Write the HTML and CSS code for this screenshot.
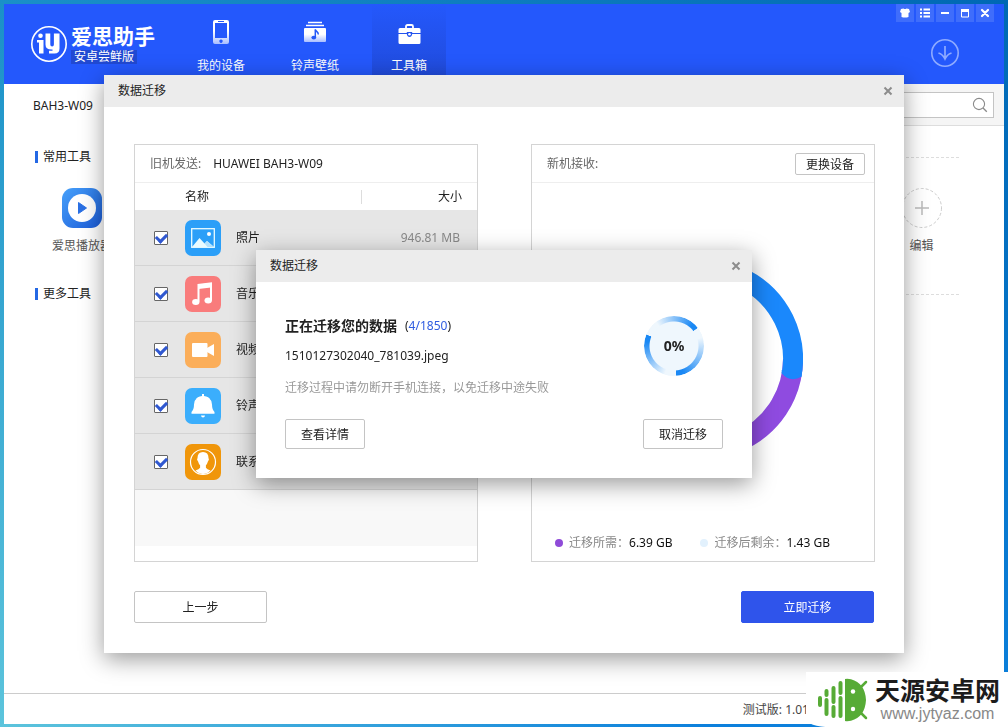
FILE: index.html
```html
<!DOCTYPE html>
<html lang="zh-CN">
<head>
<meta charset="utf-8">
<title>爱思助手 安卓尝鲜版</title>
<link rel="stylesheet" href="styles.css">
</head>
<body>
<div class="window">
  <header class="topbar">
    <div class="brand">
      <svg class="brand-mark" viewBox="0 0 38 38" aria-hidden="true">
        <circle cx="19" cy="19" r="17.2" fill="none" stroke="#fff" stroke-width="1.6"/>
        <circle cx="10.500" cy="10.8" r="2.300" fill="#fff"/>
        <path d="M7 15h6.500v13.500H9V17.500H7z" fill="#fff"/>
        <path d="M15.500 8.500h4.800v11q0 2 1.800 2t1.800-2v-11h5.600v15q0 5-5 5h-5.500v-2.800h3.500v-1.200q-7 .5-7-5z" fill="#fff"/>
      </svg>
      <div class="brand-text">
        <strong class="brand-name">爱思助手</strong>
        <span class="brand-edition">安卓尝鲜版</span>
      </div>
    </div>
    <nav class="tabs">
      <a class="tab" href="#device">
        <svg class="tab-icon" viewBox="0 0 26 26" aria-hidden="true">
          <defs><linearGradient id="fade" x1="0" y1="0" x2="0" y2="1"><stop offset="0" stop-color="#fff"/><stop offset=".45" stop-color="#fff"/><stop offset="1" stop-color="#a9beff"/></linearGradient></defs>
          <path fill="url(#fade)" fill-rule="evenodd" d="M7 1h12q2 0 2 2v20q0 2-2 2H7q-2 0-2-2V3q0-2 2-2zM7 4v15h12V4zM13 20.500a1.700 1.700 0 1 0 .01 0z"/>
          <path d="M10 2.500h6" stroke="#2458f8" stroke-width="1"/>
        </svg>
        <span>我的设备</span>
      </a>
      <a class="tab" href="#ringtones">
        <svg class="tab-icon" viewBox="0 0 26 26" aria-hidden="true">
          <path d="M6 3.500h14M4 6.500h18" stroke="#fff" stroke-width="1.500"/>
          <rect x="2" y="9" width="22" height="14" rx="1" fill="url(#fade)"/>
          <path d="M13.300 10.500c.4 2 3.200 2 3 5" fill="none" stroke="#2458f8" stroke-width="1.500"/>
          <path d="M13.300 10.500V18" stroke="#2458f8" stroke-width="1.500"/>
          <ellipse cx="11.800" cy="18.600" rx="2.400" ry="1.900" fill="#2458f8"/>
        </svg>
        <span>铃声壁纸</span>
      </a>
      <a class="tab tab-active" href="#toolbox" aria-current="page">
        <svg class="tab-icon" viewBox="0 0 26 26" aria-hidden="true">
          <path d="M10 9V7.500Q10 6 11.500 6h4Q17 6 17 7.500V9" fill="none" stroke="#fff" stroke-width="1.800"/>
          <path d="M4 9h19q1.500 0 1.500 1.500V14h-8.300v-1h-5.400v1H2.500v-3.500Q2.500 9 4 9z" fill="#fff"/>
          <path d="M2.500 15h8.300q.5 3 2.700 3t2.700-3h8.300v8.500q0 1.500-1.500 1.500H4q-1.500 0-1.500-1.500z" fill="#fff"/>
          <circle cx="13.500" cy="15.200" r="1.300" fill="#fff"/>
        </svg>
        <span>工具箱</span>
      </a>
    </nav>
    <div class="top-actions">
      <div class="window-controls">
        <button type="button" aria-label="皮肤"><svg viewBox="0 0 18 18"><path d="M5 5l2.500-.5q1.500 1.200 3 0L13 5l1 3-1.500 1v4q-3.500 1-7 0V9L4 8z" fill="#fff"/></svg></button>
        <button type="button" aria-label="菜单"><svg viewBox="0 0 18 18"><path d="M4 5.500h2M4 9h2M4 12.500h2M7.500 5.500H14M7.500 9H14M7.500 12.500H14" stroke="#fff" stroke-width="2"/></svg></button>
        <button type="button" aria-label="最小化"><svg viewBox="0 0 18 18"><path d="M5 9h8" stroke="#fff" stroke-width="2"/></svg></button>
        <button type="button" aria-label="最大化"><svg viewBox="0 0 18 18"><path d="M5.500 6v7h7V6" fill="none" stroke="#fff"/><path d="M5 6.500h8" stroke="#fff" stroke-width="3"/></svg></button>
        <button type="button" aria-label="关闭"><svg viewBox="0 0 18 18"><path d="M6 6l6 6M12 6l-6 6" stroke="#fff" stroke-width="2.200" stroke-linecap="round"/></svg></button>
      </div>
      <button class="download" type="button" aria-label="下载">
        <svg viewBox="0 0 30 30"><circle cx="15" cy="15" r="13.200" fill="none" stroke="#8fabff" stroke-width="1.600"/><path d="M15 8v13M8.500 15q4.500 1.500 6.500 6q2-4.500 6.500-6" fill="none" stroke="#8fabff" stroke-width="1.700"/></svg>
      </button>
    </div>
  </header>

  <div class="subbar">
    <a class="device-tab" href="#bah3">BAH3-W09</a>
    <form class="search">
      <input type="text" aria-label="搜索">
      <button type="button" aria-label="搜索"><svg viewBox="0 0 18 18"><circle cx="8" cy="8" r="5.600" fill="none" stroke="#8a8a8a" stroke-width="1.100"/><path d="M12 12l3.800 3.800" stroke="#8a8a8a" stroke-width="1.300"/></svg></button>
    </form>
  </div>

  <main class="tools">
    <section class="tool-section">
      <h2 class="section-title">常用工具</h2>
      <div class="tool-row">
        <a class="tool" href="#player">
          <svg class="tool-icon" viewBox="0 0 40 40" aria-hidden="true">
            <defs><linearGradient id="player" x1="0" y1="0" x2="1" y2="1"><stop offset="0" stop-color="#46a0fa"/><stop offset="1" stop-color="#1c5cd8"/></linearGradient></defs>
            <rect width="40" height="40" rx="11" fill="url(#player)"/><circle cx="20" cy="20" r="14" fill="#fff"/><path d="M16.500 14.500l8 5.500-8 5.500z" fill="#2a70e4" stroke="#2a70e4" stroke-linejoin="round"/>
          </svg>
          <span>爱思播放器</span>
        </a>
        <a class="tool" href="#edit">
          <svg class="tool-icon" viewBox="0 0 40 40" aria-hidden="true"><circle cx="20" cy="20" r="19.500" fill="none" stroke="#ccc" stroke-dasharray="3 2"/><path d="M20 13v14M13 20h14" stroke="#bbb" stroke-width="1.500"/></svg>
          <span>编辑</span>
        </a>
      </div>
    </section>
    <section class="tool-section">
      <h2 class="section-title">更多工具</h2>
    </section>
  </main>

  <footer class="statusbar">测试版: 1.01</footer>
</div>

<div class="overlay">
  <div class="dialog" role="dialog" aria-label="数据迁移">
    <div class="dialog-head">
      <h1 class="dialog-title">数据迁移</h1>
      <button class="close" type="button" aria-label="关闭"><svg viewBox="0 0 10 10"><path d="M1.500 1.500l7 7M8.500 1.500l-7 7" stroke="#8c8c8c" stroke-width="2"/></svg></button>
    </div>
    <div class="dialog-body">
      <div class="panels">
        <section class="panel">
          <div class="panel-head"><span class="panel-label">旧机发送:</span><span>HUAWEI BAH3-W09</span></div>
          <table class="items">
            <thead><tr><th class="col-check"></th><th class="col-name"><span>名称</span></th><th class="col-size">大小</th></tr></thead>
            <tbody>
              <tr>
                <td class="col-check"><input type="checkbox" checked id="photo"></td>
                <td class="col-name"><label for="photo"><svg viewBox="0 0 36 36"><rect width="36" height="36" rx="7" fill="#2b9ff8"/><rect x="6.700" y="8.700" width="22.600" height="18.600" fill="none" stroke="#e9fbff" stroke-width="1.300"/><circle cx="24" cy="14" r="2" fill="#fff"/><path d="M7 27l7.500-9 5 5.500 2.500-2.500 7 6z" fill="#e9fbff"/><path d="M19.500 23.500l2.500-2.500 7 6h-6.500z" fill="#b4e2fd"/></svg>照片</label></td>
                <td class="col-size">946.81 MB</td>
              </tr>
              <tr>
                <td class="col-check"><input type="checkbox" checked id="music"></td>
                <td class="col-name"><label for="music"><svg viewBox="0 0 36 36"><rect width="36" height="36" rx="7" fill="#f97c7c"/><path d="M13.500 25.500V9l12.500-1.500v17" fill="none" stroke="#fff" stroke-width="2"/><path d="M13.500 8.500l12.500-1.500v4.500L13.500 13z" fill="#fff"/><ellipse cx="10.800" cy="26" rx="3.700" ry="3" fill="#fff"/><ellipse cx="23.200" cy="24.500" rx="3.700" ry="3" fill="#fff"/></svg>音乐</label></td>
                <td class="col-size"></td>
              </tr>
              <tr>
                <td class="col-check"><input type="checkbox" checked id="video"></td>
                <td class="col-name"><label for="video"><svg viewBox="0 0 36 36"><rect width="36" height="36" rx="7" fill="#fbae5a"/><rect x="7" y="11" width="15.500" height="14" rx="1" fill="#fff"/><path d="M22 16l7-4v12l-7-4z" fill="#fff"/></svg>视频</label></td>
                <td class="col-size"></td>
              </tr>
              <tr>
                <td class="col-check"><input type="checkbox" checked id="ring"></td>
                <td class="col-name"><label for="ring"><svg viewBox="0 0 36 36"><rect width="36" height="36" rx="7" fill="#3baefc"/><path d="M17 8V6h2v2q7.500 1 8 8.500 0 5 2.500 7.500v1.800H6.500V24q2.500-2.500 2.500-7.500Q9.500 9 17 8z" fill="#fff"/><path d="M16 27.500h4q-.3 2-2 2t-2-2z" fill="#fff"/></svg>铃声</label></td>
                <td class="col-size"></td>
              </tr>
              <tr>
                <td class="col-check"><input type="checkbox" checked id="contact"></td>
                <td class="col-name"><label for="contact"><svg viewBox="0 0 36 36"><rect width="36" height="36" rx="7" fill="#f0960a"/><circle cx="18" cy="18" r="12.500" fill="none" stroke="#fff" stroke-width="1.200"/><path d="M18 8q5.500 0 5.500 6 1.200 1.500-.6 3.500-.6 2.500-2 3.800v2.500q1 1.500 4.600 2.700Q22 30 18 30t-7.500-3.500q3.600-1.200 4.600-2.700v-2.500q-1.400-1.300-2-3.800-1.800-2-.6-3.500 0-6 5.500-6z" fill="#fff"/></svg>联系人</label></td>
                <td class="col-size"></td>
              </tr>
            </tbody>
          </table>
          <div class="items-rest"></div>
        </section>

        <section class="panel">
          <div class="panel-head"><span class="panel-label">新机接收:</span><button class="btn btn-small" type="button">更换设备</button></div>
          <div class="chart">
            <svg viewBox="0 0 200 200" aria-hidden="true">
              <circle cx="100" cy="100" r="90" fill="none" stroke="#e6f2fd" stroke-width="20"/>
              <path d="M190 100A90 90 0 0 1 36.400 163.600" fill="none" stroke="#8f4be0" stroke-width="20"/>
              <path d="M36.400 36.400A90 90 0 0 1 188.600 116" fill="none" stroke="#1a88fc" stroke-width="20"/>
              <path d="M178.700 114.200Q187 124 198.400 117.700L198.500 115 178.700 111z" fill="#1a88fc"/>
            </svg>
          </div>
          <ul class="legend">
            <li><i class="dot dot-need"></i>迁移所需：<b>6.39 GB</b></li>
            <li><i class="dot dot-left"></i>迁移后剩余：<b>1.43 GB</b></li>
          </ul>
        </section>
      </div>
      <div class="dialog-actions">
        <button class="btn btn-large" type="button">上一步</button>
        <button class="btn btn-large btn-primary" type="button">立即迁移</button>
      </div>
    </div>
  </div>
</div>

<div class="overlay">
  <div class="dialog progress-dialog" role="alertdialog" aria-label="数据迁移">
    <div class="dialog-head">
      <h1 class="dialog-title">数据迁移</h1>
      <button class="close" type="button" aria-label="关闭"><svg viewBox="0 0 10 10"><path d="M1.500 1.500l7 7M8.500 1.500l-7 7" stroke="#8c8c8c" stroke-width="2"/></svg></button>
    </div>
    <div class="progress-body">
      <div class="progress-info">
        <div>
          <p class="progress-title"><strong>正在迁移您的数据</strong><span>(<em>4/1850</em>)</span></p>
          <p class="progress-file">1510127302040_781039.jpeg</p>
          <p class="progress-hint">迁移过程中请勿断开手机连接，以免迁移中途失败</p>
        </div>
        <div class="spinner"><span>0%</span></div>
      </div>
      <div class="progress-actions">
        <button class="btn" type="button">查看详情</button>
        <button class="btn" type="button">取消迁移</button>
      </div>
    </div>
  </div>
</div>

<aside class="site-mark">
  <svg class="site-logo" viewBox="0 0 52 44" aria-hidden="true">
    <g stroke="#57ab36" stroke-width="4" stroke-linecap="round">
      <path d="M4 20v7M10.500 13v4M10.500 22v14M17.500 10v14M17.500 29v9M24.500 5v10M24.500 20v18"/>
      <path d="M45 9l5-5M45 35l5 5" stroke-width="2.500"/>
    </g>
    <path d="M29 1q3-.5 6 .3Q49 5 50 22q-1 17-15 20.700-3 .8-6 .3z" fill="#57ab36"/>
    <circle cx="37" cy="13.500" r="2.200" fill="#fff"/><circle cx="37" cy="31" r="2.200" fill="#fff"/>
  </svg>
  <div class="site-text"><strong>天源安卓网</strong><span>www.jytyaz.com</span></div>
</aside>
</body>
</html>
```
FILE: styles.css
```css
* { box-sizing: border-box; }

body {
  margin: 0;
  height: 100vh;
  padding: 4px 4px 3px;
  overflow: hidden;
  font: 12px/18px "Noto Sans", "Noto Sans CJK SC", sans-serif;
  color: #222;
  background:
    linear-gradient(to right, #5cc4dc, transparent 70%) bottom / 100% 4px no-repeat,
    linear-gradient(to bottom, #1a90c8, #5cc4dc) left / 4px 100% no-repeat,
    linear-gradient(to right, #1a90c8, #0068b4) top / 100% 4px no-repeat,
    linear-gradient(to bottom, #0068b4, #0c80dc);
}

h1, h2, p, ul { margin: 0; padding: 0; font-weight: normal; }
a { color: inherit; text-decoration: none; }
svg { display: block; }
button, input { font: inherit; color: inherit; }
button { padding: 0; border: 0; background: none; }

.window { height: 100%; display: flex; flex-direction: column; background: #fff; }

/* Top bar */
.topbar { height: 80px; display: flex; background: #2458fc; color: #fff; }
.brand { width: 180px; display: flex; align-items: center; gap: 3px; padding-left: 26px; font-family: "Liberation Sans", "Noto Sans CJK SC", sans-serif; }
.brand-mark { width: 38px; height: 38px; flex: none; }
.brand-text { display: flex; flex-direction: column; align-items: flex-start; }
.brand-name { font-size: 21px; line-height: 26px; font-weight: bold; white-space: nowrap; }
.brand-edition { padding: 0 3px; line-height: 14px; background: #2149d2; }
.tabs { display: flex; gap: 20px; }
.tab { width: 74px; display: flex; flex-direction: column; align-items: center; gap: 12px; padding-top: 15px; }
.tab-icon { width: 26px; height: 26px; }
.tab-active { background: linear-gradient(#2458fc, #204ad8); }
.top-actions { margin-left: auto; display: flex; flex-direction: column; align-items: center; gap: 16px; padding-right: 10px; }
.window-controls { display: flex; gap: 2px; }
.window-controls button { width: 18px; height: 18px; background: #3f6dfb; }
.download { width: 30px; height: 30px; }

/* Device and search bar */
.subbar { height: 42px; display: flex; justify-content: space-between; background: #f5f5f5; border-bottom: 1px solid #ddd; }
.device-tab { width: 180px; height: 42px; padding: 0 29px; line-height: 43px; background: #fff; }
.search { flex: 1; max-width: 200px; height: 26px; margin: 8px 10px; display: flex; align-items: center; background: #fff; border: 1px solid #c4c4c4; }
.search input { flex: 1; min-width: 0; height: 100%; border: 0; background: none; }
.search button { width: 18px; height: 18px; margin-right: 4px; }

/* Tools page */
.tools { flex: 1; padding: 21px 45px 0 31px; }
.tool-section { height: 137px; }
.section-title { display: flex; align-items: center; gap: 5px; font-size: 12px; line-height: 20px; }
.section-title::before { content: ""; width: 3px; height: 12px; background: #2468e4; }
.section-title::after { content: ""; flex: 1; margin-left: 10px; border-top: 1px dashed #ddd; }
.tool-row { display: flex; justify-content: space-between; padding-top: 21px; }
.tool { width: 94px; display: flex; flex-direction: column; align-items: center; gap: 9px; color: #555; }
.tool + .tool { width: 75px; }
.tool-icon { width: 40px; height: 40px; }

.statusbar { height: 31px; padding-right: 195px; text-align: right; line-height: 31px; color: #444; border-top: 1px solid #ccc; }

/* Dialogs */
.overlay { position: fixed; inset: 1px 0 0; display: flex; align-items: center; justify-content: center; }
.dialog { width: 800px; max-width: 100%; background: #fff; box-shadow: 0 6px 22px rgba(0, 0, 0, .4); }
.dialog-head { display: flex; align-items: center; justify-content: space-between; height: 32px; padding: 0 11px 0 14px; background: #ececec; }
.dialog-title { font-size: 12px; }
.close svg { width: 10px; height: 10px; }
.dialog-body { padding: 37px 29px 30px 30px; }
.panels { display: grid; grid-template-columns: 1fr 1fr; gap: 53px; }
.panel { display: flex; flex-direction: column; height: 418px; border: 1px solid #d4d4d4; }
.panel-head { display: flex; align-items: center; gap: 12px; height: 38px; padding: 0 9px 0 15px; border-bottom: 1px solid #eee; }
.panel-label { color: #666; }
.dialog-actions { display: flex; justify-content: space-between; padding: 29px 1px 0 0; }

.btn { width: 80px; height: 30px; padding-top: 2px; background: #fff; border: 1px solid #c4c4c4; border-radius: 2px; }
.btn-small { width: 70px; height: 22px; margin-left: auto; line-height: 18px; }
.btn-large { width: 133px; height: 32px; }
.btn-primary { background: #2f54eb; border-color: #2f54eb; color: #fff; }

.items { width: 100%; border-spacing: 0; table-layout: fixed; }
.items th, .items td { padding: 0; text-align: left; font-weight: normal; }
.items th { height: 27px; }
.items td { height: 56px; background: #e6e6e6; border-bottom: 1px solid #d4d4d4; }
.items .col-check { width: 50px; padding-left: 19px; }
.items th.col-name span { display: block; border-right: 1px solid #ddd; line-height: 14px; }
.items .col-name { width: 177px; }
.items .col-name label { display: flex; align-items: center; gap: 15px; }
.items .col-name svg { width: 36px; height: 36px; }
.items .col-size { padding-right: 15px; text-align: right; }
.items td.col-size { color: #888; padding-right: 17px; }
.items input { appearance: none; display: grid; place-items: center; width: 14px; height: 14px; margin: 0; background: #fff; border: 1px solid #666; border-radius: 1px; }
.items input:checked::after { content: ""; width: 8px; height: 5px; border: solid #3058d0; border-width: 0 0 3px 3px; transform: rotate(-45deg); margin-bottom: 2px; }
.items-rest { height: 56px; background: #f8f8f8; }

.chart { flex: 1; display: grid; place-items: center; }
.chart svg { width: 200px; height: 200px; }
.legend { display: flex; gap: 28px; padding: 0 0 9px 23px; line-height: 18px; list-style: none; color: #888; }
.legend li { display: flex; align-items: center; }
.legend b { font-weight: normal; color: #111; }
.dot { width: 8px; height: 8px; margin-right: 6px; border-radius: 50%; }
.dot-need { background: #8f4bd8; }
.dot-left { background: #e2f1fd; }

/* Progress dialog */
.progress-dialog { width: 496px; }
.progress-body { padding: 33px 29px 29px; }
.progress-info { display: flex; justify-content: space-between; padding-right: 19px; }
.progress-title { display: flex; gap: 8px; line-height: 22px; }
.progress-title strong { font-size: 14px; }
.progress-title em { font-style: normal; color: #2f5ce0; }
.progress-file { padding-top: 10px; }
.progress-hint { padding-top: 14px; color: #999; }
.spinner { position: relative; display: grid; place-items: center; width: 60px; height: 60px; margin-top: 1px; border-radius: 50%; background: #eff7fd; font-size: 14px; font-weight: bold; }
.spinner::before {
  content: "";
  position: absolute;
  inset: 0;
  border-radius: 50%;
  background: conic-gradient(from 53deg, #eff7fd 0deg 20deg, #1a88f4 108deg 122deg, #eff7fd 123deg 145deg, #1a88f4 225deg 239deg, #eff7fd 240deg 270deg, #1a88f4 348deg 359deg, #eff7fd 360deg);
  mask: radial-gradient(circle, transparent 24px, #000 25px);
}
.progress-actions { display: flex; justify-content: space-between; padding-top: 22px; }

/* Site mark over the lower right corner */
.site-mark { position: fixed; right: 0; bottom: 0; display: flex; align-items: center; gap: 7px; height: 55px; padding: 0 8px 0 10px; background: #fff; border-bottom-left-radius: 24px 8px; }
.site-logo { width: 52px; height: 44px; }
.site-text { display: flex; flex-direction: column; align-items: center; gap: 1px; font-family: "Liberation Sans", "Noto Sans CJK SC", sans-serif; }
.site-text strong { font-size: 25px; line-height: 28px; font-weight: bold; color: #1c1c1c; }
.site-text span { font-size: 16px; line-height: 16px; color: #888; }
```
